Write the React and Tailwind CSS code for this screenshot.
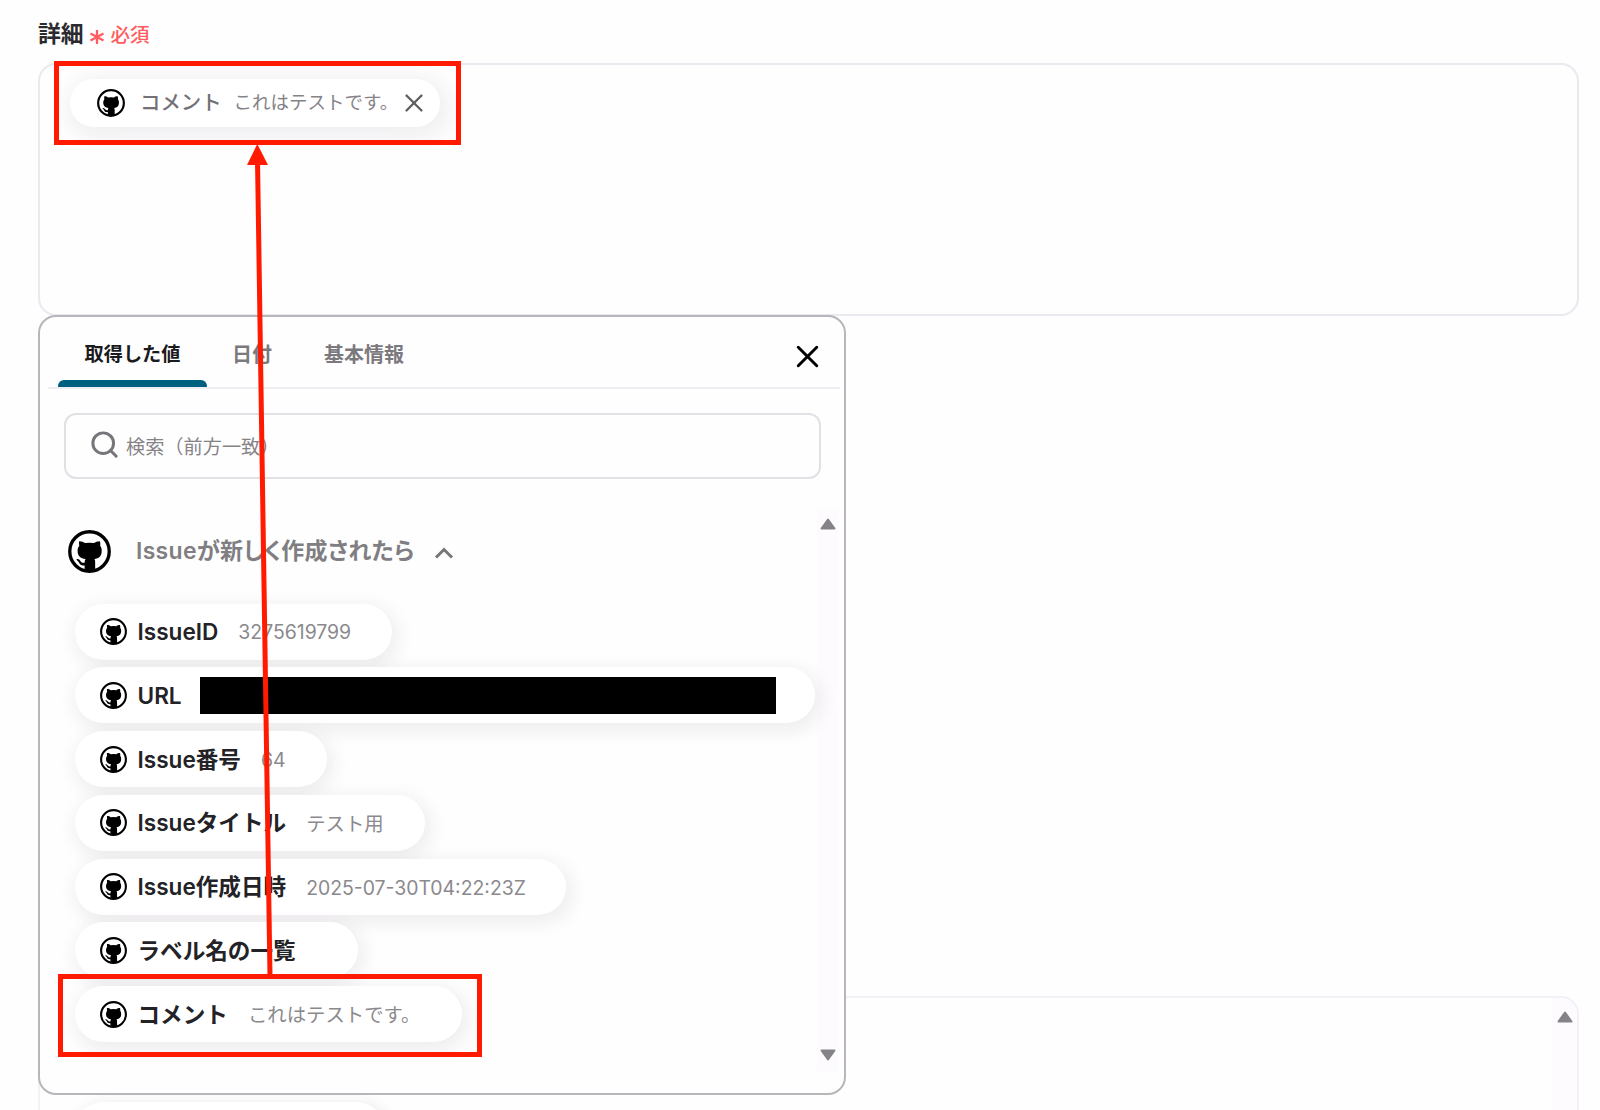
import React from "react";
import { Search, X } from "lucide-react";

const issueValues = [
  { label: "IssueID", value: "3275619799", width: "w-[317px]" },
  { label: "URL", masked: true, width: "w-[740px]" },
  { label: "Issue番号", value: "64", width: "w-[252px]" },
  { label: "Issueタイトル", value: "テスト用", width: "w-[350px]" },
  { label: "Issue作成日時", value: "2025-07-30T04:22:23Z", width: "w-[491px]" },
  { label: "ラベル名の一覧", width: "w-[283px]" },
  { label: "コメント", value: "これはテストです。", width: "w-[387px]" },
];

function GithubIcon({ className }) {
  return (
    <svg viewBox="0 0 44 44" className={className}>
      <circle cx="22" cy="22" r="20.2" fill="white" stroke="black" strokeWidth="3.4" />
      <path
        d="M11.500 11.500c2.200-.1 4.400.8 6 1.900a26 26 0 0 1 9 0c1.600-1.100 3.800-2 6-1.900.7 1.600.7 3.200.4 4.500 1.200 1.500 1.600 3.200 1.600 5.200 0 5.600-2.900 8-7.600 8.600.7.8.9 1.700.9 2.900V42h-10.800v-5.800c-3.400.5-4.800-.8-5.600-2.600-.4-1-1.200-1.900-2.300-2.700-.8-.7-.1-1.300.8-1.200 1.400.2 2.300 1.200 3 2.200.9 1.400 2.200 1.900 4.100 1.500 0-1.500.3-2.700 1-3.600-4.800-.6-8.200-3-8.200-8.600 0-2 .6-3.700 1.800-5.200-.3-1.300-.6-2.900-.1-4.500z"
        fill="black"
      />
    </svg>
  );
}

function Triangle({ className }) {
  return (
    <svg viewBox="0 0 16 12" className={className}>
      <path d="M8 1.500 14.500 10.500H1.500z" fill="#858387" stroke="#858387" strokeWidth="2" strokeLinejoin="round" />
    </svg>
  );
}

function ValueChip({ label, value, masked, width }) {
  return (
    <div
      className={`${width} relative flex h-[56px] shrink-0 items-center rounded-full bg-white pl-[24.5px] shadow-[3px_5px_18px_3px_rgba(60,40,70,0.08)]`}
    >
      <GithubIcon className="size-[27px] shrink-0" />
      <span className="mt-[1px] ml-[11px] text-[22.6px] font-semibold whitespace-nowrap text-[#232226]">{label}</span>
      {value && (
        <span className="mt-[3px] ml-5 text-[19.4px] whitespace-nowrap text-[#8b898d]">{value}</span>
      )}
      {masked && <span className="ml-[18px] h-[37px] w-[576px] bg-black" />}
    </div>
  );
}

function ValuePicker() {
  return (
    <div className="absolute top-[315px] left-[38px] flex h-[780px] w-[808px] flex-col rounded-[18px] border-2 border-[#b8b6ba] bg-[#fefefe]">
      <div className="mr-1 ml-2 flex h-[72px] shrink-0 border-b-2 border-[#f0eef3] pl-[10px] text-[20px] font-bold text-[#7b797d]">
        <div className="relative flex w-[149px] justify-center pt-[23px] text-[19.2px] text-[#1b1a1d]">
          取得した値
          <span className="absolute bottom-0 left-0 h-[7px] w-full rounded-t-md bg-[#006080]" />
        </div>
        <div className="pt-[23px] pl-[25px]">日付</div>
        <div className="pt-[23px] pl-[52px]">基本情報</div>
        <X className="mt-[21px] mr-[14px] ml-auto size-[37px] text-black" strokeWidth={1.9} />
      </div>

      <div className="mt-[24px] ml-[24px] flex h-[66px] w-[757px] shrink-0 items-center rounded-xl border-2 border-[#e2e0e4] pl-[23px]">
        <Search className="mb-[3px] size-[31px] text-[#77757a]" strokeWidth={2.3} />
        <span className="mt-[3px] ml-[6px] text-[19.2px] text-[#858387]">検索（前方一致）</span>
      </div>

      <div className="mt-[30px] mr-[6px] flex h-[562px] justify-between">
        <div className="flex flex-col pt-[20px] pl-[28px]">
          <div className="flex h-[44px] items-center">
            <GithubIcon className="size-[43px]" />
            <span className="mt-[1px] ml-[25px] text-[23px] font-semibold tracking-[0.3px] text-[#807e82] [font-feature-settings:'palt']">
              Issueが新しく作成されたら
            </span>
            <svg viewBox="0 0 20 12" className="mt-[3px] ml-[20px] h-3 w-5">
              <path d="M2 10.500 10 2.500l8 8" fill="none" stroke="#77757a" strokeWidth="3" />
            </svg>
          </div>
          <div className="mt-[30.5px] ml-[7px] flex flex-col gap-[7.8px]">
            {issueValues.map((item) => (
              <ValueChip key={item.label} {...item} />
            ))}
          </div>
        </div>
        <div className="flex w-[21px] flex-col items-center justify-between bg-[#fdfbfe] pt-[9px] pb-[10px]">
          <Triangle className="h-3 w-4" />
          <Triangle className="h-3 w-4 rotate-180" />
        </div>
      </div>
    </div>
  );
}

export default function App() {
  return (
    <div className="relative h-[1110px] w-[1600px] overflow-hidden bg-[#fefefe] pt-[18px] pl-[38px] font-[Inter,'Noto_Sans_CJK_JP',sans-serif]">
      <div className="flex h-[32px] items-center">
        <span className="text-[22.8px] font-bold text-[#2b2a2e]">詳細</span>
        <svg viewBox="0 0 16 16" className="mt-[6px] ml-[5px] size-4">
          <path d="M8 1v14M1.500 4.500l13 7M14.500 4.500l-13 7" stroke="#ff5c60" strokeWidth="2.300" />
        </svg>
        <span className="mt-[4px] ml-[6px] text-[19.500px] font-medium text-[#ff5c60]">必須</span>
      </div>

      <div className="mt-[13px] h-[253px] w-[1541px] rounded-[18px] border-2 border-[#e9e9f0] pt-[14px] pl-[30px]">
        <div className="flex h-[48px] w-[370px] items-center rounded-full bg-white pl-[27px] shadow-[3px_5px_20px_6px_rgba(60,40,70,0.07)]">
          <GithubIcon className="size-7 shrink-0" />
          <span className="ml-[15px] text-[20.4px] font-medium text-[#737176]">コメント</span>
          <span className="ml-[12px] text-[18.500px] whitespace-nowrap text-[#858387]">これはテストです。</span>
          <X className="ml-[1px] size-[30px] shrink-0 text-[#5f5d62]" strokeWidth={1.8} />
        </div>
      </div>

      {/* next field, partly behind the picker */}
      <div className="mt-[680px] flex h-[140px] w-[1541px] justify-between rounded-[18px] border-2 border-[#f3f1f6]">
        <div className="mt-[104px] ml-[35px] h-[56px] w-[310px] rounded-full bg-white shadow-[3px_4px_14px_3px_rgba(60,40,70,0.09)]" />
        <div className="flex w-[25px] justify-center rounded-tr-2xl bg-[#fdfbfe] pt-[13px]">
          <Triangle className="h-3 w-4" />
        </div>
      </div>

      <ValuePicker />

      {/* annotations */}
      <div className="absolute top-[61px] left-[54px] h-[84px] w-[407px] border-[5px] border-[#ff1a00]" />
      <div className="absolute top-[974px] left-[58px] h-[83px] w-[424px] border-[5px] border-[#ff1a00]" />
      <svg viewBox="0 0 40 840" className="absolute top-[140px] left-[240px] h-[840px] w-[40px]">
        <path d="M17.500 20 30 836" stroke="#ff1a00" strokeWidth="5" />
        <path d="M17.300 4 28 25H7z" fill="#ff1a00" />
      </svg>
    </div>
  );
}
